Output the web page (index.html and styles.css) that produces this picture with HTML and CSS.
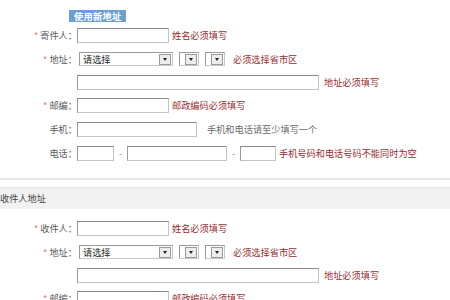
FILE: index.html
```html
<!DOCTYPE html>
<html lang="zh">
<head>
<meta charset="utf-8">
<link rel="stylesheet" href="styles.css">
</head>
<body>
<div class="page">
  <section class="sender">
    <div class="btn-row"><span class="btn">使用新地址</span></div>
    <div class="row">
      <label class="lbl"><span class="req">*</span> 寄件人：</label>
      <span class="inp w92"></span><span class="err">姓名必须填写</span>
    </div>
    <div class="row">
      <label class="lbl"><span class="req">*</span> 地址：</label>
      <span class="sel sel-main"><span class="sel-text">请选择</span><span class="sel-btn"></span></span>
      <span class="sel sel-small"><span class="sel-btn"></span></span>
      <span class="sel sel-small"><span class="sel-btn"></span></span>
      <span class="err gap7">必须选择省市区</span>
    </div>
    <div class="row short">
      <label class="lbl"></label>
      <span class="inp w242"></span><span class="err gap5">地址必须填写</span>
    </div>
    <div class="row">
      <label class="lbl"><span class="req">*</span> 邮编：</label>
      <span class="inp w92"></span><span class="err">邮政编码必须填写</span>
    </div>
    <div class="row">
      <label class="lbl">手机：</label>
      <span class="inp w120"></span><span class="hint">手机和电话请至少填写一个</span>
    </div>
    <div class="row">
      <label class="lbl">电话：</label>
      <span class="inp w37"></span><span class="dash">-</span>
      <span class="inp w100"></span><span class="dash">-</span>
      <span class="inp w36"></span><span class="err">手机号码和电话号码不能同时为空</span>
    </div>
  </section>
  <div class="band">收件人地址</div>
  <section class="receiver">
    <div class="row">
      <label class="lbl"><span class="req">*</span> 收件人：</label>
      <span class="inp w92"></span><span class="err">姓名必须填写</span>
    </div>
    <div class="row">
      <label class="lbl"><span class="req">*</span> 地址：</label>
      <span class="sel sel-main"><span class="sel-text">请选择</span><span class="sel-btn"></span></span>
      <span class="sel sel-small"><span class="sel-btn"></span></span>
      <span class="sel sel-small"><span class="sel-btn"></span></span>
      <span class="err gap7">必须选择省市区</span>
    </div>
    <div class="row short">
      <label class="lbl"></label>
      <span class="inp w242"></span><span class="err gap5">地址必须填写</span>
    </div>
    <div class="row">
      <label class="lbl"><span class="req">*</span> 邮编：</label>
      <span class="inp w92"></span><span class="err">邮政编码必须填写</span>
    </div>
  </section>
</div>
</body>
</html>
```
FILE: styles.css
```css
html, body {
  margin: 0;
  padding: 0;
  background: #fff;
}
body {
  font-family: "Noto Sans CJK SC", "Noto Sans", sans-serif;
  font-size: 9.2px;
  color: #5a5a5a;
  overflow: hidden;
}
.page {
  width: 450px;
}
.sender {
  padding-top: 9px;
  padding-bottom: 13px;
  border-bottom: 2px solid #e6e6e6;
}
.btn-row {
  padding-left: 69px;
  height: 14px;
}
.btn {
  display: inline-block;
  height: 12px;
  line-height: 12px;
  padding: 0 5px;
  background: #6b9fd3;
  color: #fff;
  font-weight: bold;
  letter-spacing: 0.3px;
}
.row {
  display: flex;
  align-items: center;
  height: 24px;
}
.row.short {
  height: 22px;
}
.lbl {
  width: 77px;
  flex: none;
  text-align: right;
  white-space: nowrap;
  color: #5a5a5a;
}
.req {
  color: #e07a7a;
}
.inp {
  display: block;
  flex: none;
  height: 13px;
  box-sizing: content-box;
  border: 1px solid #c4c4c4;
  border-top-color: #8a8a8a;
  border-left-color: #9a9a9a;
  background: #fff;
}
.w92 { width: 90px; }
.w242 { width: 240px; }
.w120 { width: 118px; }
.w37 { width: 35px; }
.w100 { width: 98px; }
.w36 { width: 34px; }
.err {
  color: #962d31;
  margin-left: 3px;
  white-space: nowrap;
}
.gap7 { margin-left: 8px; }
.gap5 { margin-left: 5px; }
.hint {
  color: #6a6a6a;
  margin-left: 10px;
  white-space: nowrap;
}
.dash {
  width: 13px;
  text-align: center;
  color: #888;
}
.sel {
  display: flex;
  align-items: center;
  flex: none;
  height: 12px;
  border: 1px solid #9a9a9a;
  border-right-color: #c8c8c8;
  border-bottom-color: #c8c8c8;
  background: #fff;
  padding: 0 1px;
}
.sel-main {
  width: 90px;
  margin-left: 2px;
}
.sel-text {
  flex: 1;
  color: #222;
  padding-left: 2px;
}
.sel-small {
  width: 16px;
  margin-left: 6px;
  justify-content: flex-end;
}
.sel-btn {
  position: relative;
  width: 10px;
  height: 9px;
  border: 1px solid #9a9a9a;
  background: #ededed;
  flex: none;
}
.sel-btn::after {
  content: "";
  position: absolute;
  left: 3px;
  top: 3px;
  border-left: 2px solid transparent;
  border-right: 2px solid transparent;
  border-top: 3px solid #222;
}
.band {
  margin-top: 7px;
  height: 22px;
  line-height: 21px;
  background: #f1f1f1;
  border-top: 1px solid #e2e2e2;
  box-sizing: border-box;
  color: #444;
  padding-left: 0;
}
.receiver {
  padding-top: 7px;
}
```
